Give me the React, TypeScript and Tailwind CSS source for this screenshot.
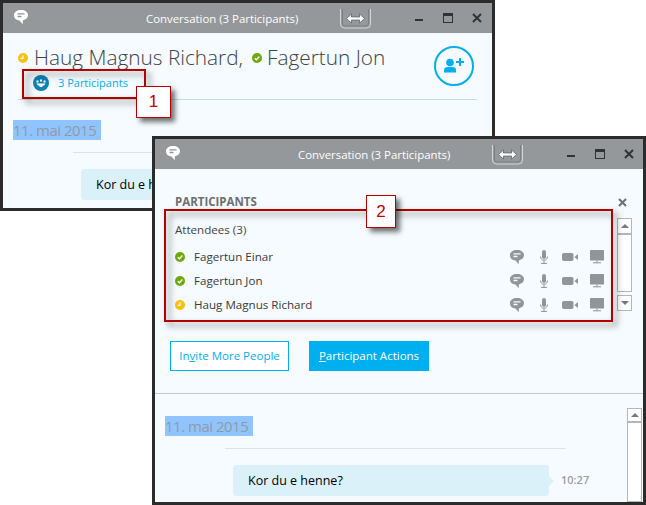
const font = { fontFamily: '"Open Sans", "Noto Sans", sans-serif' };

function ChatIcon({ fill, line, className }: { fill: string; line: string; className?: string }) {
  return (
    <svg viewBox="0 0 14 14" className={className}>
      <path d="M7 0C3 0 0 2 0 5.300c0 3 2.400 5 5.500 5.200C6.500 11.500 7.500 13 9 14c-.3-1.200-.3-2.300 0-3.700 3-.6 5-2.400 5-5C14 2 11 0 7 0z" fill={fill} />
      <path d="M3.500 3.800h7M3.500 6.500h4" stroke={line} strokeWidth="1.300" fill="none" />
    </svg>
  );
}

function Mic() {
  return (
    <svg viewBox="0 0 14 14" className="w-[14px] h-[14px]">
      <rect x="5" y="0" width="4" height="9" rx="2" fill="#8f9599" />
      <path d="M3.500 6.500c0 2.500 1.500 3.700 3.500 3.700s3.500-1.200 3.500-3.700M7 10v3M4 13.500h6" stroke="#8f9599" strokeWidth="1" fill="none" />
    </svg>
  );
}

function Video() {
  return (
    <svg viewBox="0 0 16 14" className="w-[16px] h-[14px]">
      <rect x="0" y="3" width="11.500" height="8" rx="2" fill="#8f9599" />
      <path d="M12.500 7L16 4v6z" fill="#8f9599" />
    </svg>
  );
}

function Screen() {
  return (
    <svg viewBox="0 0 14 14" className="w-[14px] h-[14px]">
      <rect x="0" y="0" width="14" height="10.500" rx="0.500" fill="#8f9599" />
      <path d="M7 10.500v2M3 12.800h8" stroke="#8f9599" strokeWidth="1" fill="none" />
    </svg>
  );
}

function StatusDot({ away }: { away?: boolean }) {
  return (
    <svg viewBox="0 0 10 10" className="w-[10px] h-[10px] shrink-0 block">
      <circle cx="5" cy="5" r="5" fill={away ? '#fcc10f' : '#6fa80c'} />
      {away ? (
        <path d="M5 2.200V5.300H2.600" stroke="#fff" strokeWidth="1.200" fill="none" />
      ) : (
        <path d="M2.700 5.200L4.400 6.800 7.400 3.500" stroke="#fff" strokeWidth="1.300" fill="none" />
      )}
    </svg>
  );
}

function TitleBar() {
  return (
    <div className="h-[30px] shrink-0 bg-[#94989b] flex items-start pl-[11px]">
      <ChatIcon fill="#fff" line="#94989b" className="w-[14px] h-[14px] mt-[7px]" />
      <div className="ml-[118px] w-[152px] mt-[7px] text-center whitespace-nowrap text-[11.400px] leading-[18px] text-white">
        Conversation (3 Participants)
      </div>
      <svg viewBox="0 0 31 20" className="ml-[42px] mt-[6px] w-[31px] h-[20px]">
        <path d="M.5 0v15a4 4 0 0 0 4 4h22a4 4 0 0 0 4-4V0" stroke="#d4d6d7" fill="none" />
        <path d="M2.500 0v14a3 3 0 0 0 3 3h20a3 3 0 0 0 3-3V0" stroke="#7d8184" fill="none" />
        <path d="M6.500 9.500l5-4.500v3h8V5l5 4.500-5 4.500v-3h-8v3z" fill="#fff" stroke="#55595c" strokeWidth="0.700" />
      </svg>
      <div className="ml-[44px] mt-[16px] w-[8px] h-[2px] bg-[#2f3336]" />
      <div className="ml-[20px] mt-[10px] w-[10px] h-[10px] border border-[#2f3336] border-t-[3px]" />
      <svg viewBox="0 0 10 10" className="ml-[19px] mt-[10px] w-[10px] h-[10px]">
        <path d="M1 1l8 8M9 1l-8 8" stroke="#2f3336" strokeWidth="2" />
      </svg>
    </div>
  );
}

function Conversation() {
  return (
    <div>
      <div className="ml-[10px] w-[88px] h-[20px] bg-[#90c4ff] text-[#8f9aa5] text-[15px] tracking-[-0.5px] leading-[20px] whitespace-nowrap">
        11. mai 2015
      </div>
      <div className="ml-[70px] mt-[12px] w-[341px] h-px bg-[#dfe3e5]" />
      <div className="ml-[78px] mt-[16px] flex items-center">
        <div className="relative w-[316px] h-[31px] rounded-[3px] bg-[#dbf1fa] pl-[15px] text-[12.500px] leading-[31px] text-black">
          Kor du e henne?
          <div className="absolute left-full top-[11px] border-y-[5px] border-y-transparent border-l-[5px] border-l-[#dbf1fa]" />
        </div>
        <div className="ml-[12px] text-[11px] font-semibold text-[#9a9ea1]">10:27</div>
      </div>
    </div>
  );
}

function ScrollButton({ up }: { up?: boolean }) {
  return (
    <div className="w-[15px] h-[16px] border border-[#b4b6b8] bg-white flex items-center justify-center">
      <div className={up ? 'border-x-[4px] border-x-transparent border-b-[4px] border-b-[#77797b]' : 'border-x-[4px] border-x-transparent border-t-[4px] border-t-[#77797b]'} />
    </div>
  );
}

function Callout({ n, className }: { n: string; className: string }) {
  return (
    <div
      className={`absolute bg-white border-[1.500px] border-[#b30000] flex items-center justify-center text-[17px] text-[#c00000] shadow-[4px_4px_5px_rgba(0,0,0,0.55)] ${className}`}
      style={{ fontFamily: '"Liberation Sans", sans-serif' }}
    >
      {n}
    </div>
  );
}

const people = [
  { name: 'Fagertun Einar' },
  { name: 'Fagertun Jon' },
  { name: 'Haug Magnus Richard', away: true },
];

export default function App() {
  return (
    <div className="relative w-[646px] h-[505px] bg-white overflow-hidden" style={font}>
      {/* back window */}
      <div className="absolute left-0 top-0 w-[495px] h-[211px] border-[3px] border-[#2b2b2b] bg-[#f5fbfe] flex flex-col overflow-hidden">
        <TitleBar />
        <div className="relative mx-[15px] h-[67px] shrink-0 border-b border-[#c5dde0]">
          <div className="flex items-center h-[30px] mt-[10px] text-[#3d4347] text-[20.800px] font-light whitespace-nowrap">
            <StatusDot away />
            <span className="ml-[6px] w-[218px]">Haug Magnus Richard,</span>
            <StatusDot />
            <span className="ml-[5px]">Fagertun Jon</span>
          </div>
          <div className="flex items-center mt-[2px] ml-[15px]">
            <svg viewBox="0 0 16 16" className="w-[16px] h-[16px]">
              <circle cx="8" cy="8" r="8" fill="#0e80b2" />
              <path d="M3.500 5.500h2v2h-2zM7 4.500h2v2H7zM10.500 5.500h2v2h-2zM3.500 8.500h9L11 10.500H9.500V12h-3v-1.500H5z" fill="#fff" />
            </svg>
            <span className="ml-[9px] text-[11px] leading-[16px] text-[#00aff0]">3 Participants</span>
          </div>
          <svg viewBox="0 0 40 40" className="absolute right-[3px] top-[13px] w-[40px] h-[40px]">
            <circle cx="20" cy="20" r="19" stroke="#00aff0" strokeWidth="2" fill="none" />
            <circle cx="16" cy="16.500" r="3.800" fill="#00aff0" />
            <path d="M10 26.500v-2.500c0-2 2-3.200 6-3.200s6 1.200 6 3.200v2.500z" fill="#00aff0" />
            <path d="M26 12v8M22 16h8" stroke="#00aff0" strokeWidth="2" />
          </svg>
        </div>
        <div className="pt-[20px]">
          <Conversation />
        </div>
      </div>
      <div className="absolute left-[22px] top-[69px] w-[124px] h-[30px] border-[2px] border-[#b30000] [filter:drop-shadow(4px_4px_3px_rgba(0,0,0,0.5))]" />
      <Callout n="1" className="left-[136px] top-[86px] w-[35px] h-[32px]" />

      {/* front window */}
      <div className="absolute left-[152px] top-[136px] w-[494px] h-[369px] border-[3px] border-[#2b2b2b] bg-[#f5fbfe] flex flex-col overflow-hidden">
        <TitleBar />
        <div className="h-[225px] shrink-0 border-b border-[#c4c8ca] pl-[20px] pr-[11px] pt-[25px]">
          <div className="flex items-center justify-between h-[16px] pr-[5px]">
            <span className="text-[11.500px] font-bold text-[#6d6f72]">PARTICIPANTS</span>
            <svg viewBox="0 0 9 9" className="w-[9px] h-[9px]">
              <path d="M1 1l7 7M8 1L1 8" stroke="#6d6f72" strokeWidth="2" />
            </svg>
          </div>
          <div className="flex mt-[8px]">
            <div className="w-[430px] pt-[3px]">
              <div className="h-[18px] text-[11.600px] leading-[18px] text-[#444]">Attendees (3)</div>
              <div className="mt-[6px]">
                {people.map(p => (
                  <div key={p.name} className="h-[24px] flex items-center text-[11.600px] text-[#3a3a3a]">
                    <StatusDot away={p.away} />
                    <span className="ml-[9px] flex-1">{p.name}</span>
                    <ChatIcon fill="#8f9599" line="#f5fbfe" className="w-[14px] h-[14px]" />
                    <span className="ml-[13px]"><Mic /></span>
                    <span className="ml-[11px]"><Video /></span>
                    <span className="ml-[12px]"><Screen /></span>
                  </div>
                ))}
              </div>
            </div>
            <div className="ml-[13px] w-[15px] flex flex-col">
              <ScrollButton up />
              <div className="h-[58px] border border-[#b4b6b8] bg-white" />
              <div className="mt-[3px]"><ScrollButton /></div>
            </div>
          </div>
          <div className="flex gap-[20px] -ml-[5px] mt-[24px]">
            <div className="w-[119px] h-[30px] border border-[#00aff0] bg-white flex items-center justify-center text-[11.500px] text-[#00aff0]">
              <span>In<u>v</u>ite More People</span>
            </div>
            <div className="w-[120px] h-[30px] bg-[#00aff0] flex items-center justify-center text-[11.500px] text-white">
              <span><u>P</u>articipant Actions</span>
            </div>
          </div>
        </div>
        <div className="flex-1 flex overflow-hidden">
          <div className="flex-1 pt-[22px]">
            <Conversation />
          </div>
          <div className="mt-[14px] mr-px w-[15px] flex flex-col">
            <ScrollButton up />
            <div className="h-[90px] border border-[#b4b6b8] bg-white" />
          </div>
        </div>
      </div>
      <div className="absolute left-[164px] top-[209px] w-[449px] h-[113px] border-[2px] border-[#b30000] [filter:drop-shadow(4px_4px_3px_rgba(0,0,0,0.5))]" />
      <Callout n="2" className="left-[366px] top-[195px] w-[30px] h-[33px]" />
    </div>
  );
}
